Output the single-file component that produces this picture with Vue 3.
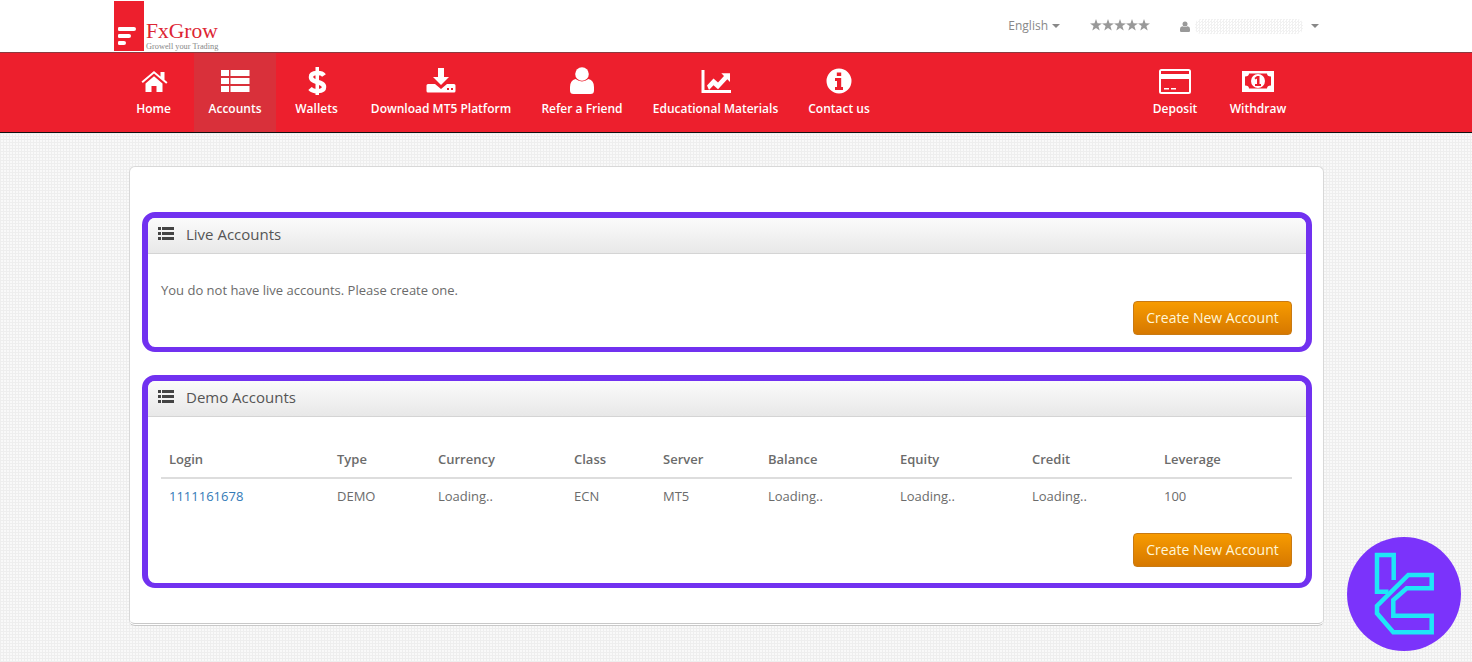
<script setup>
const navLeft = [
  { label: "Home", icon: "home", w: 65 },
  { label: "Accounts", icon: "accounts", w: 82, active: true },
  { label: "Wallets", icon: "wallets", w: 81 },
  { label: "Download MT5 Platform", icon: "download", w: 168 },
  { label: "Refer a Friend", icon: "user", w: 114 },
  { label: "Educational Materials", icon: "chart", w: 153 },
  { label: "Contact us", icon: "info", w: 94 },
];
const navRight = [
  { label: "Deposit", icon: "card", w: 76 },
  { label: "Withdraw", icon: "money", w: 90 },
];
const columns = ["Login", "Type", "Currency", "Class", "Server", "Balance", "Equity", "Credit", "Leverage"];
const colWidths = [168, 101, 136, 89, 105, 132, 132, 132, 136];
const row = ["1111161678", "DEMO", "Loading..", "ECN", "MT5", "Loading..", "Loading..", "Loading..", "100"];
const starPoints = "6,0 7.500,4.300 12,4.400 8.400,7.100 9.700,11.500 6,8.900 2.300,11.500 3.600,7.100 0,4.400 4.500,4.300";
</script>

<template>
  <div class="page">
    <header class="topbar">
      <div class="logo">
        <div class="logo-mark">
          <span class="bar bar-a"></span>
          <span class="bar bar-b"></span>
          <span class="bar bar-c"></span>
        </div>
        <div class="logo-text">
          <div class="logo-name">FxGrow</div>
          <div class="logo-tag">Growell your Trading</div>
        </div>
      </div>
      <div class="top-right">
        <span class="lang">English<i class="caret"></i></span>
        <svg class="stars" viewBox="0 0 60 12">
          <polygon v-for="n in 5" :key="n" :points="starPoints" :transform="`translate(${(n - 1) * 12} 0)`" />
        </svg>
        <svg class="top-user" viewBox="0 0 12 13"><circle cx="6" cy="3.400" r="3" /><path d="M1 13a1 1 0 0 1-1-1V9.500Q0 6.500 3 6.200Q6 8 9 6.200Q12 6.500 12 9.500V12a1 1 0 0 1-1 1Z" /></svg>
        <span class="user-blur"></span>
        <i class="caret"></i>
      </div>
    </header>

    <nav class="nav">
      <template v-for="(group, g) in [navLeft, navRight]" :key="g">
        <div class="nav-group">
          <a v-for="item in group" :key="item.label" class="nav-item" :class="{ active: item.active }" :style="{ width: item.w + 'px' }">
            <svg class="nav-icon" viewBox="0 0 36 30">
              <g v-if="item.icon === 'home'">
                <path d="M5.500 15.500L18 5l6.500 5.400V6h4v7.800l3 2.500-1.300 1.500L18 7.500 6.800 17Z" />
                <path d="M9.500 26V17.500L18 10.300l8.500 7.200V26H20.500V20h-5v6Z" />
              </g>
              <g v-else-if="item.icon === 'accounts'">
                <rect x="4" y="4" width="8" height="6" /><rect x="13.500" y="4" width="19" height="6" />
                <rect x="4" y="12" width="8" height="6" /><rect x="13.500" y="12" width="19" height="6" />
                <rect x="4" y="20" width="8" height="6" /><rect x="13.500" y="20" width="19" height="6" />
              </g>
              <g v-else-if="item.icon === 'wallets'">
                <rect x="16.500" y="1" width="3.500" height="28" />
                <path class="line" d="M25 9.500C23 6.500 12 5.500 12 11c0 6 13 4 13 10 0 5.500-11 5-14 1.500" />
              </g>
              <g v-else-if="item.icon === 'download'">
                <path d="M15 2h6v9h5l-8 8-8-8h5Z" />
                <path fill-rule="evenodd" d="M5 18h7l6 5 6-5h7a1.500 1.500 0 0 1 1.500 1.500V25a1.500 1.500 0 0 1-1.500 1.500H5A1.500 1.500 0 0 1 3.500 25v-5.500A1.500 1.500 0 0 1 5 18Zm19 4v2h2v-2Zm4 0v2h2v-2Z" />
              </g>
              <g v-else-if="item.icon === 'user'">
                <circle cx="18" cy="8" r="6.800" />
                <path d="M9.500 28Q6 28 6 24.500V21Q6 14.500 11.500 13Q18 17.800 24.500 13Q30 14.500 30 21V24.500Q30 28 26.500 28Z" />
              </g>
              <g v-else-if="item.icon === 'chart'">
                <path d="M3.500 4h3v20H33v3H3.500Z" />
                <path d="M9 19.500l6.500-7 4.500 4 6-6.500-2.700-2.700H32v8.700l-2.700-2.700-9.300 10-4.500-4-4.500 4.700Z" />
              </g>
              <g v-else-if="item.icon === 'info'">
                <path fill-rule="evenodd" d="M18 2.500a12.500 12.500 0 1 0 0 25 12.500 12.500 0 0 0 0-25ZM15.800 6.500h4.400v3.500h-4.400ZM14 12h6.200v9h1.800v3H14v-3h2v-6h-2Z" />
              </g>
              <g v-else-if="item.icon === 'card'">
                <path fill-rule="evenodd" d="M4.500 3h27A2.500 2.500 0 0 1 34 5.500v20a2.500 2.500 0 0 1-2.500 2.500h-27A2.500 2.500 0 0 1 2 25.500v-20A2.500 2.500 0 0 1 4.500 3Zm-.5 2v3h28V5Zm0 8v13h28V13Zm3 9h5v1.500H7Zm7 0h5v1.500h-5Z" />
              </g>
              <g v-else-if="item.icon === 'money'">
                <path fill-rule="evenodd" d="M2 5h32v21H2Zm7 2.500q0 3-4 3v9q4 0 4 3h18q0-3 4-3v-9q-4 0-4-3Z" />
                <path fill-rule="evenodd" d="M18 8a7 7 0 1 0 0 14 7 7 0 0 0 0-14ZM17 10h2.500v8H21v2h-6v-2h2v-5.500l-1.500 1-1-1.500Z" />
              </g>
            </svg>
            <span class="nav-label">{{ item.label }}</span>
          </a>
        </div>
      </template>
    </nav>

    <main class="content">
      <div class="card">
        <section class="panel panel-live">
          <div class="panel-head">
            <svg class="list-icon" viewBox="0 0 16 13"><path d="M0 0h3v3H0ZM4 0h12v3H4ZM0 5h3v3H0ZM4 5h12v3H4ZM0 10h3v3H0ZM4 10h12v3H4Z" /></svg>
            <span>Live Accounts</span>
          </div>
          <div class="panel-body">
            <p class="empty">You do not have live accounts. Please create one.</p>
            <div class="actions"><button class="btn">Create New Account</button></div>
          </div>
        </section>

        <section class="panel panel-demo">
          <div class="panel-head">
            <svg class="list-icon" viewBox="0 0 16 13"><path d="M0 0h3v3H0ZM4 0h12v3H4ZM0 5h3v3H0ZM4 5h12v3H4ZM0 10h3v3H0ZM4 10h12v3H4Z" /></svg>
            <span>Demo Accounts</span>
          </div>
          <div class="panel-body">
            <table class="accounts">
              <colgroup><col v-for="(w, i) in colWidths" :key="i" :style="{ width: w + 'px' }" /></colgroup>
              <thead>
                <tr><th v-for="c in columns" :key="c">{{ c }}</th></tr>
              </thead>
              <tbody>
                <tr>
                  <td v-for="(v, i) in row" :key="i">
                    <a v-if="i === 0" class="login">{{ v }}</a>
                    <template v-else>{{ v }}</template>
                  </td>
                </tr>
              </tbody>
            </table>
            <div class="actions"><button class="btn">Create New Account</button></div>
          </div>
        </section>
      </div>
    </main>

    <svg class="watermark" viewBox="0 0 142 137">
      <circle cx="74" cy="69" r="57" fill="#7b33fb" />
      <g fill="none" stroke="#1fe6f7" stroke-width="4.500" stroke-linejoin="miter">
        <path d="M58.500 66.700H47V30H63.700V55" />
        <path d="M101.700 50H78.300L47 81V88.300L63.300 107.300H101.700V90.700H63.300V75L76.700 63.300H101.700Z" />
      </g>
    </svg>
  </div>
</template>

<style scoped>
.page {
  position: relative;
  height: 662px;
  overflow: hidden;
  font-family: "Open Sans", "Liberation Sans", sans-serif;
  background-color: #f9f9f9;
  background-image:
    repeating-linear-gradient(0deg, #eeeeee 0 1px, transparent 1px 3px),
    repeating-linear-gradient(90deg, #eeeeee 0 1px, transparent 1px 3px);
  color: #666;
}
.topbar {
  height: 52px;
  background: #fff;
  display: flex;
  align-items: stretch;
  justify-content: space-between;
  padding: 0 153px 0 114px;
}
.logo {
  display: flex;
  align-items: flex-end;
  padding-bottom: 1px;
}
.logo-mark {
  width: 30px;
  height: 50px;
  background: #ed1f2d;
  display: flex;
  flex-direction: column;
  justify-content: flex-end;
  gap: 3px;
  padding: 0 0 6px 4px;
  box-sizing: border-box;
}
.bar {
  display: block;
  height: 4px;
  background: #fff;
  border-radius: 2px 3px 3px 2px;
}
.bar-a { width: 18px; }
.bar-b { width: 13px; }
.bar-c { width: 8px; }
.logo-text {
  margin-left: 2px;
  font-family: "Liberation Serif", serif;
}
.logo-name {
  font-size: 21.500px;
  line-height: 20px;
  color: #dd2533;
}
.logo-tag {
  margin-top: 1px;
  font-size: 8.300px;
  line-height: 9px;
  color: #888;
  white-space: nowrap;
}
.top-right {
  display: flex;
  align-items: center;
  font-size: 12px;
  color: #888;
}
.lang {
  display: flex;
  align-items: center;
  margin-top: -1px;
}
.caret {
  display: inline-block;
  margin-left: 4px;
  border-top: 4px solid #888;
  border-left: 4px solid transparent;
  border-right: 4px solid transparent;
}
.stars {
  width: 60px;
  height: 12px;
  margin: -2px 0 0 30px;
  fill: #999;
}
.top-user {
  width: 10px;
  height: 11px;
  margin-left: 30px;
  fill: #999;
}
.user-blur {
  width: 108px;
  height: 15px;
  margin: 0 4px 0 5px;
  background-image: repeating-conic-gradient(#f1f1f1 0 25%, #fff 0 50%);
  background-size: 3px 3px;
  border-radius: 6px;
}
.nav {
  height: 79px;
  background: #ed1f2d;
  border-top: 1px solid #8a3a3f;
  border-bottom: 1px solid #111;
  display: flex;
  justify-content: space-between;
  padding: 0 169px 0 121px;
}
.nav-group {
  display: flex;
}
.nav-item {
  display: flex;
  flex-direction: column;
  align-items: center;
  color: #fff;
  white-space: nowrap;
}
.nav-item.active {
  margin-left: 8px;
  background: #d9303a;
}
.nav-icon {
  width: 36px;
  height: 30px;
  margin-top: 13px;
  fill: #fff;
}
.nav-icon .line {
  fill: none;
  stroke: #fff;
  stroke-width: 4.500;
}
.nav-label {
  margin-top: 5px;
  font-size: 12px;
  font-weight: 600;
  line-height: 16px;
}
.content {
  padding: 33px 0 0 129px;
}
.card {
  width: 1195px;
  height: 460px;
  box-sizing: border-box;
  background: #fff;
  border: 1px solid #d8d8d8;
  border-bottom: 3px double #c8c8c8;
  border-radius: 6px;
  padding: 45px 11px 0 12px;
}
.panel {
  width: 1170px;
  box-sizing: border-box;
  border: 6px solid #7131f0;
  border-bottom-width: 5px;
  border-radius: 13px;
  overflow: hidden;
  background: #fff;
}
.panel-live {
  height: 140px;
  margin-bottom: 23px;
}
.panel-demo {
  height: 213px;
}
.panel-head {
  height: 36px;
  box-sizing: border-box;
  display: flex;
  align-items: center;
  padding: 0 0 4px 10px;
  background: linear-gradient(#fbfbfb, #e8e8e8);
  border-bottom: 1px solid #d4d4d4;
  font-size: 15px;
  color: #555;
}
.list-icon {
  width: 16px;
  height: 13px;
  margin-right: 12px;
  fill: #444;
}
.panel-body {
  padding: 0 14px 0 13px;
}
.empty {
  margin: 0;
  padding-top: 27px;
  font-size: 13px;
  line-height: 18px;
  color: #6b6b6b;
}
.actions {
  display: flex;
  justify-content: flex-end;
}
.panel-live .actions {
  margin-top: 2px;
}
.panel-demo .actions {
  margin-top: 20px;
}
.btn {
  width: 159px;
  height: 34px;
  padding: 0 0 2px;
  font-family: inherit;
  font-size: 14px;
  color: #fff6d8;
  background: linear-gradient(#f79b00, #d67800);
  border: 1px solid #c97a12;
  border-radius: 4px;
}
.accounts {
  width: 1131px;
  margin-top: 24px;
  table-layout: fixed;
  border-collapse: collapse;
  font-size: 13px;
  color: #6b6b6b;
}
.accounts th {
  height: 36px;
  padding: 0 8px;
  text-align: left;
  font-weight: 600;
  border-bottom: 2px solid #ddd;
}
.accounts td {
  height: 34px;
  padding: 0 8px;
}
.login {
  color: #337ab7;
}
.watermark {
  position: absolute;
  left: 1330px;
  top: 525px;
  width: 142px;
  height: 137px;
}
</style>
